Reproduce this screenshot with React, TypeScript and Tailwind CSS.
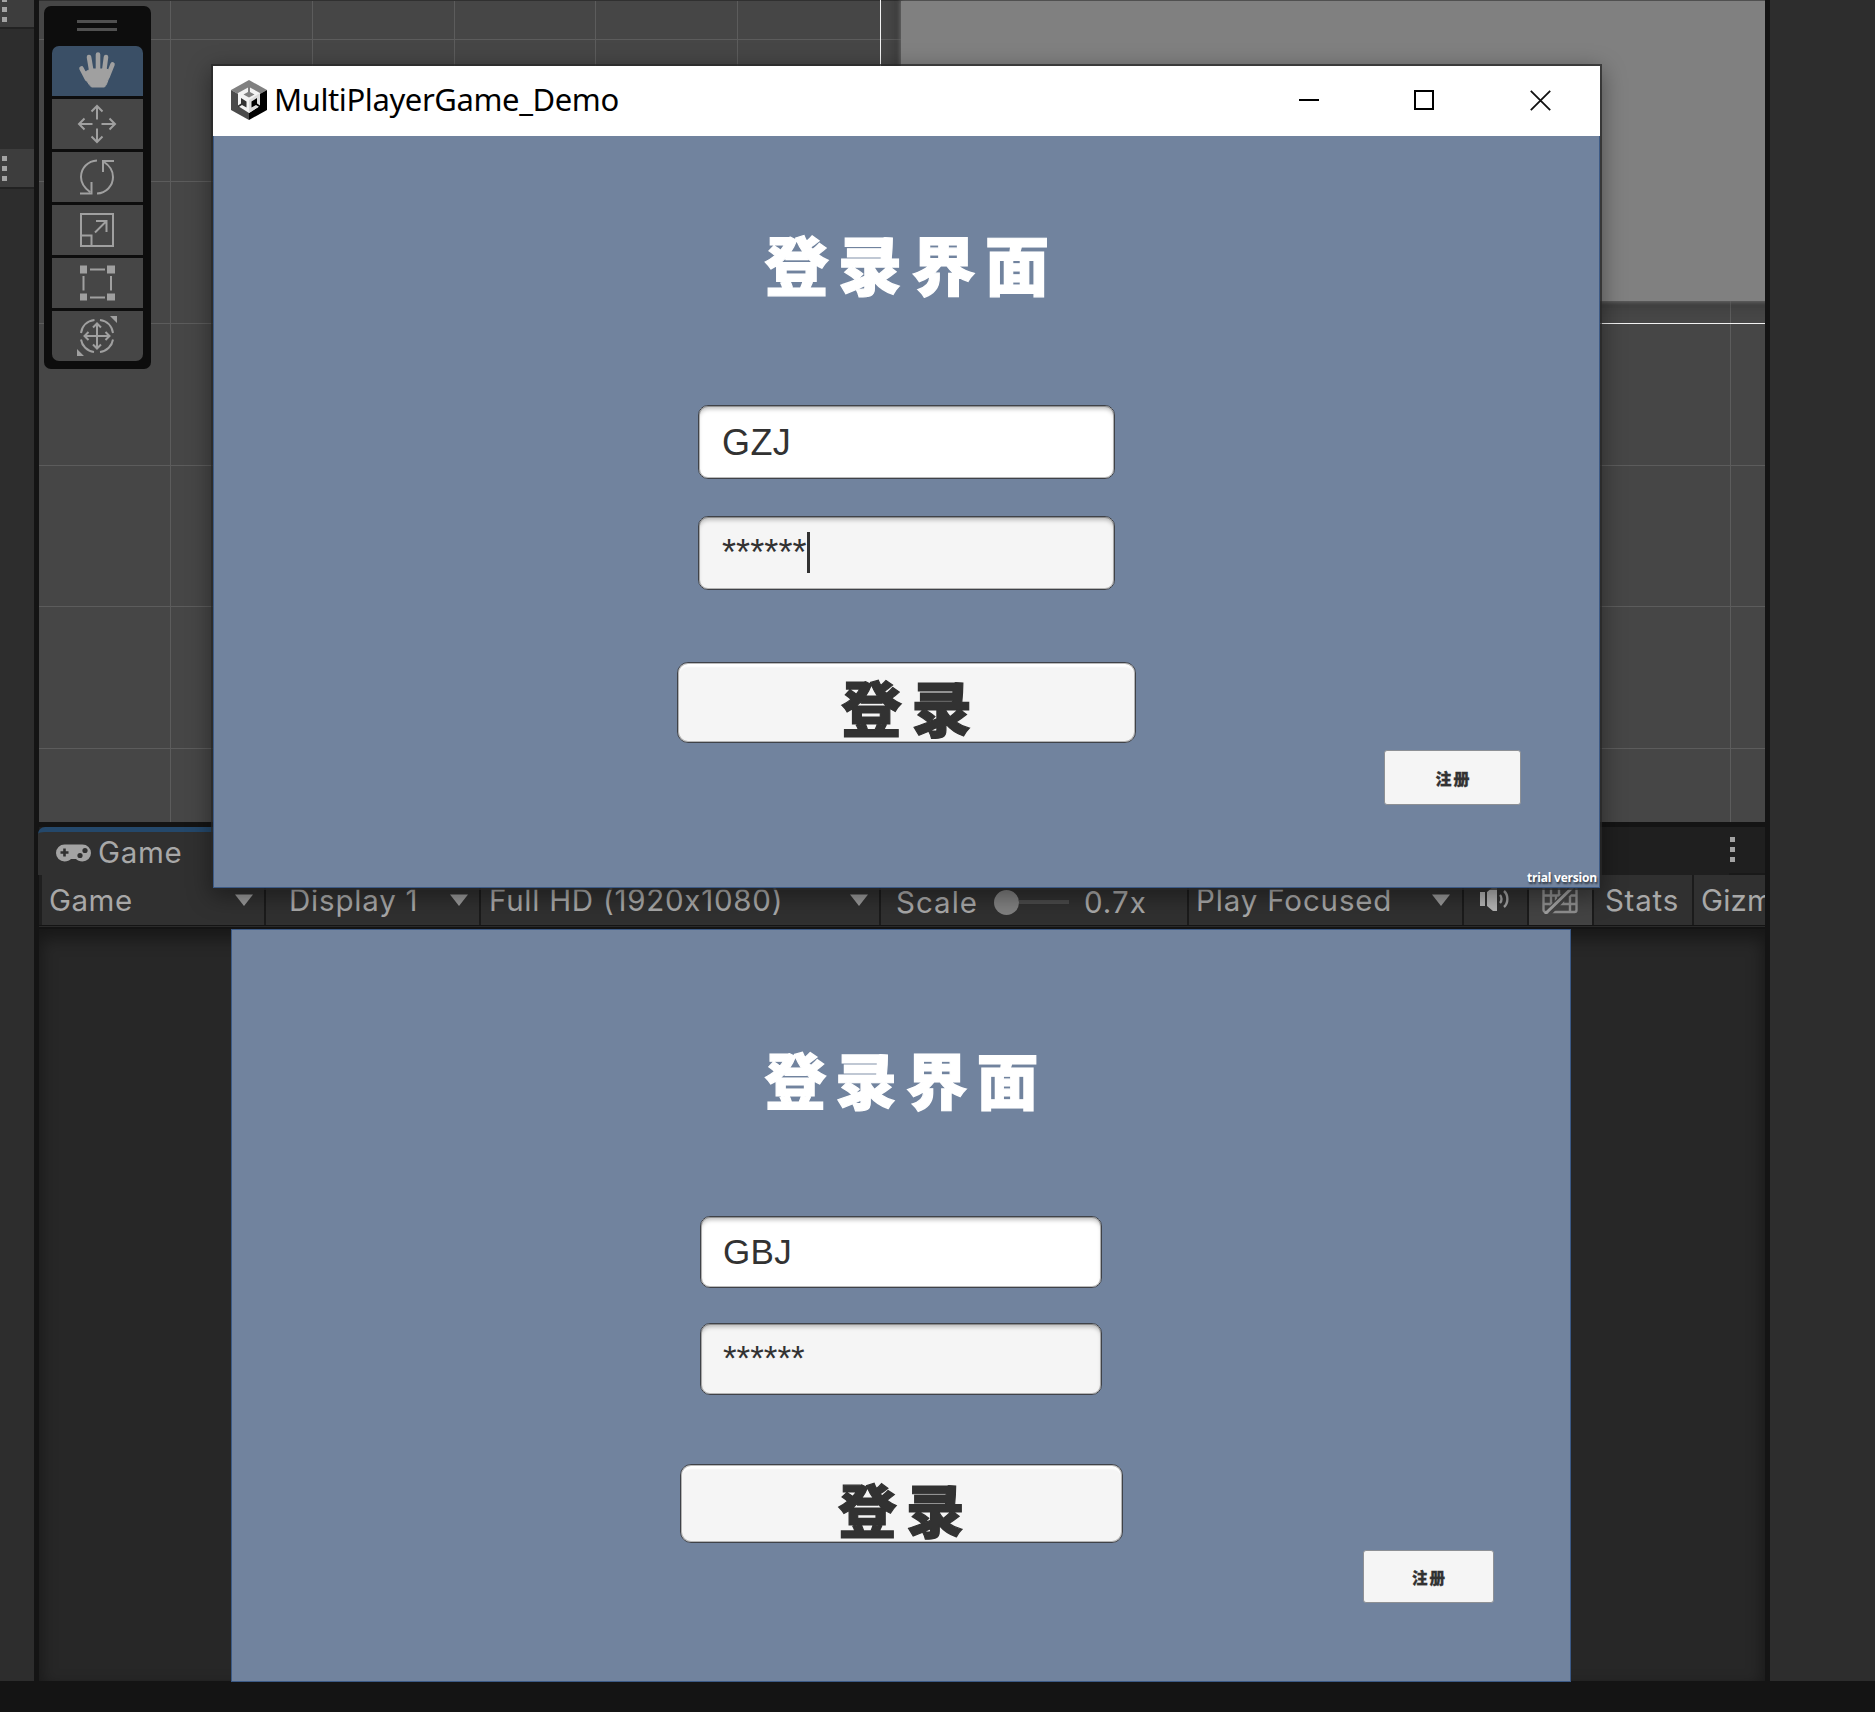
import type { ReactNode } from 'react';

type ScreenStyle = {
  title: string;
  field: string;
  user: string;
  pass: string;
  passBox: string;
  caret: string;
  login: string;
  loginText: string;
  register: string;
  registerText: string;
};

const windowed: ScreenStyle = {
  title: 'mt-[90px] h-[72px] leading-[72px] text-[64px] tracking-[9.5px] pl-[10px] [-webkit-text-stroke:1.2px_#fff]',
  field: 'mt-[107px] h-[74px] w-[417px] pl-[23px]',
  user: 'text-[36px] tracking-[0.4px] pt-[2px]',
  pass: 'text-[36px] tracking-[0.1px] pb-[1px]',
  passBox: 'mt-[37px] h-[74px] w-[417px] pl-[23px]',
  caret: 'h-[41px] w-[3px] -mt-[1px]',
  login: 'mt-[72px] h-[81px] w-[459px]',
  loginText: 'text-[60.5px] tracking-[10px] leading-[60px] pl-[10px] pt-[13px] [-webkit-text-stroke:1.2px_#323232]',
  register: 'mt-[7px] mr-[78px] h-[55px] w-[137px]',
  registerText: 'text-[16px] tracking-[2px] leading-[16px] pl-[2px] [-webkit-text-stroke:0.3px_#323232]',
};

const embedded: ScreenStyle = {
  title: 'mt-[114px] h-[70px] leading-[70px] text-[61.5px] tracking-[9.2px] pl-[10px] [-webkit-text-stroke:1.2px_#fff]',
  field: 'mt-[102px] h-[72px] w-[402px] pl-[22px]',
  user: 'text-[35px] tracking-[0.4px] pt-[1px]',
  pass: 'text-[35px] pb-[2px]',
  passBox: 'mt-[35px] h-[72px] w-[402px] pl-[22px]',
  caret: 'hidden',
  login: 'mt-[69px] h-[79px] w-[443px]',
  loginText: 'text-[58.5px] tracking-[9.5px] leading-[58px] pl-[10px] pt-[14px] [-webkit-text-stroke:1.2px_#323232]',
  register: 'mt-[7px] mr-[76px] h-[53px] w-[131px]',
  registerText: 'text-[15.5px] tracking-[2px] leading-[16px] pl-[2px] [-webkit-text-stroke:0.3px_#323232]',
};

const cjk = "font-['Noto_Sans_CJK_SC',sans-serif] font-black whitespace-nowrap";

function LoginScreen({ s, name }: { s: ScreenStyle; name: string }) {
  return (
    <div className="flex h-full w-full flex-col items-center overflow-hidden">
      <h1 className={`${cjk} ${s.title} shrink-0 text-white`}>登录界面</h1>
      <div
        className={`${s.field} flex shrink-0 items-center rounded-[10px] border border-[#3f4248] bg-white font-['Liberation_Sans',Arial,sans-serif] text-[#323232] shadow-[inset_0_4px_4px_-1px_rgba(0,0,0,0.25),inset_0_0_0_1px_rgba(60,60,60,0.35)]`}
      >
        <span className={s.user}>{name}</span>
      </div>
      <div
        className={`${s.passBox} flex shrink-0 items-center rounded-[10px] border border-[#3f4248] bg-[#f5f5f5] font-['Liberation_Sans',Arial,sans-serif] text-[#323232] shadow-[inset_0_4px_4px_-1px_rgba(0,0,0,0.25),inset_0_0_0_1px_rgba(60,60,60,0.35)]`}
      >
        <span className={s.pass}>******</span>
        <span className={`${s.caret} bg-[#323232]`} />
      </div>
      <button
        className={`${s.login} flex shrink-0 justify-center rounded-[11px] border border-[#3f4248] bg-[#f5f5f5] shadow-[inset_0_0_0_1px_rgba(60,60,60,0.35),inset_0_5px_2px_-1px_#fff]`}
      >
        <span className={`${cjk} ${s.loginText} text-[#323232]`}>登录</span>
      </button>
      <button
        className={`${s.register} flex shrink-0 items-center justify-center self-end rounded-[3px] border border-[#8d9095] bg-[#f5f5f5]`}
      >
        <span className={`${cjk} ${s.registerText} text-[#323232]`}>注册</span>
      </button>
    </div>
  );
}

function Kebab({ className = '' }: { className?: string }) {
  return (
    <div className={`flex w-[5px] flex-col gap-[5px] ${className}`}>
      <i className="h-[5px] bg-[#a3a3a3]" />
      <i className="h-[5px] bg-[#a3a3a3]" />
      <i className="h-[5px] bg-[#a3a3a3]" />
    </div>
  );
}

function Tool({ children, className = '' }: { children: ReactNode; className?: string }) {
  return (
    <div className={`flex h-[50px] w-[91px] items-center justify-center pr-[2px] ${className}`}>
      <svg width="42" height="42" viewBox="0 0 42 42" fill="none" stroke="#a0a0a0" strokeWidth="2">
        {children}
      </svg>
    </div>
  );
}

function ToolPalette() {
  return (
    <div className="absolute top-[6px] left-[5px] flex h-[363px] w-[107px] flex-col items-center gap-[3px] rounded-[7px] bg-[#0d0d0d]">
      <div className="-ml-[2px] flex h-[37px] w-[40px] flex-col gap-[5px] pt-[14px]">
        <i className="h-[3px] bg-[#505050]" />
        <i className="h-[3px] bg-[#505050]" />
      </div>
      <Tool className="rounded-t-[7px] bg-[#3a4f66]">
        <g stroke="#a0a0a0" strokeLinecap="round" strokeLinejoin="round">
          <path d="M5.500 18.500L11 29M13 7L15.500 22M22 4.500V21M30 7L28 22M36.500 14.500L31.500 27" strokeWidth="4.600" />
          <path d="M9 22L15 19H31L34 22C32 29 32 33 28.500 37H15.500C12 34 10.500 30 9 26Z" fill="#a0a0a0" strokeWidth="1" />
        </g>
      </Tool>
      <Tool className="bg-[#464646]">
        <path d="M21 16.500V3M15.500 8.500L21 3L26.500 8.500M21 25.500V39M15.500 33.500L21 39L26.500 33.500M16.500 21H3M8.500 15.500L3 21L8.500 26.500M25.500 21H39M33.500 15.500L39 21L33.500 26.500" />
      </Tool>
      <Tool className="bg-[#464646]">
        <path d="M21 4.500C12 5 5 12 5 21C5 27 8.500 32 14 36M4 37.500H15.500V26M21 37.500C30 37 37 30 37 21C37 15 33.500 9.500 28 6M38 5H27V16" />
      </Tool>
      <Tool className="bg-[#464646]">
        <path d="M5 5H37V37H5ZM5 26.500H15.500V37M19 23.500L30 12.500M20 12H30.500V23" />
      </Tool>
      <Tool className="bg-[#464646]">
        <path d="M4 3.500h7v8h-7zM31 3.500h8v8h-8zM4 31.500h7v7h-7zM31 31.500h8v7h-8z" fill="#a0a0a0" stroke="none" />
        <path d="M14 7.500H29M14 35.500H29M7.500 14V28.500M35 14V28.500" />
      </Tool>
      <Tool className="rounded-b-[7px] bg-[#464646]">
        <path d="M21 9V33M9 21H33M17 12.500L21 8.500L25 12.500M17 29.500L21 33.500L25 29.500M12.500 17L8.500 21L12.500 25M29.500 17L33.500 21L29.500 25" />
        <path d="M18.500 5C11 6 6 11 5 18M24 5C31 6 36 11 37 18M5 24.500C6 31 11 36 18 37M37 24.500C36 31 31 36 24 37" />
        <path d="M34 1H41V8ZM1 34V41H8Z" fill="#a0a0a0" stroke="none" />
      </Tool>
    </div>
  );
}

function SceneView() {
  return (
    <div className="relative h-[822px] w-full shrink-0 overflow-hidden bg-[#464646]">
      <svg width="1726" height="822" className="block">
        <g stroke="#5c5c5c" strokeWidth="1">
          {[131.5, 273.5, 415.5, 556.5, 698.5, 1691.5].map((x) => (
            <line key={x} x1={x} x2={x} y1="0" y2="822" />
          ))}
          {[39.5, 181.5, 323.5, 465.5, 606.5, 748.5].map((y) => (
            <line key={y} y1={y} y2={y} x1="0" x2="1726" />
          ))}
        </g>
        <line x1="0" x2="1726" y1="0.5" y2="0.5" stroke="#303030" />
        <line x1="841.5" x2="841.5" y1="0" y2="323" stroke="#f2f2f2" />
        <line x1="841" x2="1726" y1="323.500" y2="323.500" stroke="#f2f2f2" />
      </svg>
      <div className="absolute top-[1px] left-[862px] h-[300px] w-[870px] bg-[#808080] shadow-[0_0_4px_1px_#6a6a6a,0_0_10px_6px_rgba(0,0,0,0.15)]" />
      <ToolPalette />
    </div>
  );
}

const Arrow = ({ className = '' }: { className?: string }) => (
  <svg width="18" height="12" viewBox="0 0 18 12" className={`shrink-0 ${className}`}>
    <path d="M0 0.500H18L9 12Z" fill="#989898" />
  </svg>
);

const Divider = () => <i className="h-full w-[2px] shrink-0 bg-[#1b1b1b]" />;

function GameTabs() {
  return (
    <div className="flex h-[48px] shrink-0 justify-between bg-[#1f1f1f]">
      <div className="-ml-[1px] flex w-[200px] items-center rounded-tl-[7px] border-t-[5px] border-[#24486b] bg-[#303030] pl-[18px]">
        <svg width="35" height="18" viewBox="0 0 35 18" className="-mt-[1px]">
          <path
            d="M8.500 0.500H26.500A8.500 8.500 0 0 1 26.500 17.500C23.500 17.500 21.500 16.500 20 15H15C13.500 16.500 11.500 17.500 8.500 17.500A8.500 8.500 0 0 1 8.500 0.500Z"
            fill="#a3a3a3"
          />
          <path d="M8.500 4.500V12.500M4.500 8.500H12.500" stroke="#303030" strokeWidth="2.600" />
          <circle cx="24" cy="11.500" r="2.600" fill="#303030" />
          <circle cx="29" cy="6.500" r="2.600" fill="#303030" />
        </svg>
        <span className="ml-[7px] pb-[2px] text-[29.5px] tracking-[0.7px]">Game</span>
      </div>
      <div className="w-[36px] border-b-2 border-[#191919] pt-[10px]">
        <Kebab className="ml-[1px]" />
      </div>
    </div>
  );
}

function GameToolbar() {
  return (
    <div className="flex h-[50px] shrink-0 items-center overflow-hidden bg-[#303030] text-[29.5px] tracking-[0.5px] whitespace-nowrap [font-feature-settings:'calt'_0]">
      <i className="h-full w-[3px] shrink-0 bg-[#1f1f1f]" />
      <div className="flex h-full w-[222px] shrink-0 items-center justify-between pr-[11px] pl-[7px]">
        <span>Game</span>
        <Arrow />
      </div>
      <Divider />
      <div className="flex h-full w-[213px] shrink-0 items-center justify-between pr-[11px] pl-[23px]">
        <span className="tracking-[0.8px]">Display 1</span>
        <Arrow />
      </div>
      <Divider />
      <div className="flex h-full w-[398px] shrink-0 items-center justify-between pr-[11px] pl-[8px]">
        <span className="tracking-[0.75px]">Full HD (1920x1080)</span>
        <Arrow />
      </div>
      <Divider />
      <div className="flex h-full w-[306px] shrink-0 items-center pt-[4px] pl-[15px]">
        <span className="w-[98px] tracking-[1px]">Scale</span>
        <i className="h-[25px] w-[25px] rounded-full bg-[#808080]" />
        <i className="h-[4px] w-[50px] bg-[#4a4a4a]" />
        <span className="ml-[15px] tracking-[1px]">0.7x</span>
      </div>
      <Divider />
      <div className="flex h-full w-[273px] shrink-0 items-center justify-between pr-[12px] pl-[7px]">
        <span className="tracking-[0.85px]">Play Focused</span>
        <Arrow />
      </div>
      <Divider />
      <div className="flex h-full w-[63px] shrink-0 items-center justify-center">
        <svg width="33" height="30" viewBox="0 0 33 30" fill="none" className="-mt-[3px]">
          <path d="M1 8H6V22H1ZM8 8L14 3H18V27H14L8 22Z" fill="#b4b4b4" />
          <path d="M21 11C23 13 23 17 21 19M25 7C29.500 11 29.500 19 25 23" stroke="#a0a0a0" strokeWidth="2.400" />
        </svg>
      </div>
      <Divider />
      <div className="flex h-full w-[63px] shrink-0 items-center justify-center bg-[#434343] pr-[2px]">
        <svg width="36" height="28" viewBox="0 0 36 28" fill="none" stroke="#8e8e8e" strokeWidth="2.400">
          <rect x="1.500" y="1" width="33" height="25" rx="2" />
          <path d="M2 9.500H34M2 18H34M9 1V26M17 1V9M25 1V9M14 9V18M21 9V18M28 9V26" />
          <path d="M31 1L6 27" stroke="#434343" strokeWidth="7" />
          <path d="M32 0L3 28" stroke="#a0a0a0" strokeWidth="3" />
        </svg>
      </div>
      <Divider />
      <div className="flex h-full w-[98px] shrink-0 items-center justify-center pr-[2px] tracking-[0.8px]">Stats</div>
      <Divider />
      <div className="flex h-full shrink-0 items-center pl-[7px] tracking-[0.2px]">Gizm</div>
    </div>
  );
}

function AppLogo() {
  return (
    <svg width="36" height="40" viewBox="0 0 36 40">
      <path d="M18 0L36 10L18 20L0 10Z" fill="#808080" />
      <path d="M0 10L18 20V40L0 30Z" fill="#4b4b4b" />
      <path d="M36 10L18 20V40L36 30Z" fill="#000" />
      <path d="M18 7L29 13V26L18 33L7 26V13Z" fill="#f3f3f3" />
      <path d="M18 20L29 13V26L18 33Z" fill="#dcdcdc" />
      <path d="M17 7H19V12L23.500 14.500L18 17.500L12.500 14.500L17 12Z" fill="#808080" />
      <path d="M10 18L15.500 21.500V27.500L11 25L7 27.500V25.500L10 23.500Z" fill="#333" />
      <path d="M26 18L20.500 21.500V27.500L25 25L29 27.500V25.500L26 23.500Z" fill="#000" />
    </svg>
  );
}

function DemoWindow() {
  return (
    <div className="absolute top-[66px] left-[213px] flex h-[822px] w-[1387px] flex-col shadow-[0_0_0_2px_rgba(40,40,40,0.75),0_6px_22px_2px_rgba(0,0,0,0.4)]">
      <div className="flex h-[70px] shrink-0 items-center bg-white pb-[2px] pl-[18px] text-black">
        <AppLogo />
        <span className="ml-[7px] pb-[2px] font-['Noto_Sans','Open_Sans',sans-serif] text-[31px] leading-[40px] tracking-[-0.4px]">
          MultiPlayerGame_Demo
        </span>
        <div className="mr-[49px] ml-auto flex items-center">
          <i className="h-[2px] w-[20px] bg-black" />
          <i className="ml-[95px] h-[20px] w-[20px] border-2 border-black" />
          <svg width="21" height="21" viewBox="0 0 21 21" className="ml-[96px]" stroke="#111" strokeWidth="1.800">
            <path d="M0.800 0.800L20.200 20.200M20.200 0.800L0.800 20.200" />
          </svg>
        </div>
      </div>
      <div className="relative h-[752px] border border-t-0 border-[#3c5a86] bg-[#71839e]">
        <LoginScreen s={windowed} name="GZJ" />
        <span className="absolute right-[2px] bottom-0 font-['Open_Sans',sans-serif] text-[12px] leading-[18px] font-bold tracking-[-0.2px] text-white [text-shadow:1px_2px_2px_rgba(0,0,0,0.6)]">
          trial version
        </span>
      </div>
    </div>
  );
}

export default function App() {
  return (
    <div className="relative flex h-[1712px] w-[1875px] flex-col overflow-hidden bg-[#141414] font-['Inter',sans-serif] text-[#a8a8a8]">
      <div className="flex h-[1681px] w-full">
        <aside className="flex w-[34px] flex-col bg-[#2d2d2d]">
          <div className="h-[29px] overflow-hidden border-b-2 border-[#222] bg-[#3d3d3d]">
            <Kebab className="-mt-[3px] ml-[2px]" />
          </div>
          <div className="mt-[120px] h-[40px] border-b-2 border-[#222] bg-[#3d3d3d] pt-[7px]">
            <Kebab className="ml-[2px]" />
          </div>
        </aside>
        <main className="mx-[5px] flex w-[1726px] flex-col">
          <SceneView />
          <div className="h-[5px] shrink-0" />
          <GameTabs />
          <GameToolbar />
          <div className="mt-[1px] h-px shrink-0 bg-[#2a2a2a]" />
          <div className="mt-[2px] flex h-[752px] shrink-0 bg-[#272727] pl-[192px] shadow-[inset_0_8px_16px_2px_rgba(0,0,0,0.4)]">
            <div className="h-[753px] w-[1340px] border border-[#3c5a86] bg-[#71839e]">
              <LoginScreen s={embedded} name="GBJ" />
            </div>
          </div>
        </main>
        <aside className="w-[105px] bg-[#2d2d2d]" />
      </div>
      <DemoWindow />
    </div>
  );
}
